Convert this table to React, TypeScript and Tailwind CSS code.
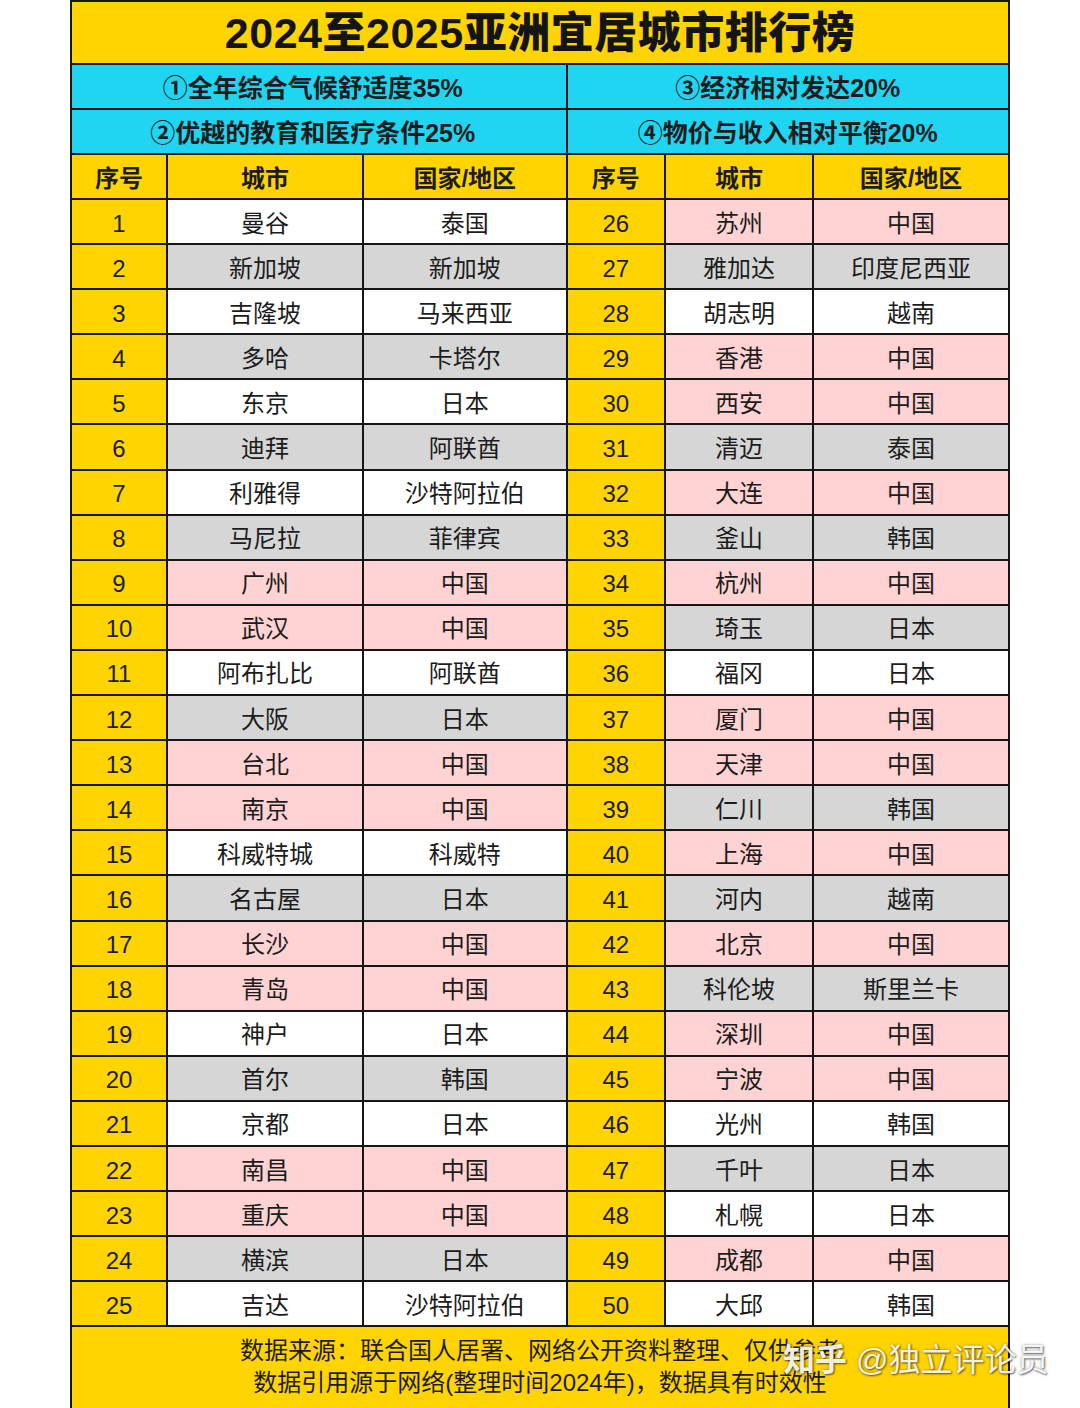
import React from "react";

type C = "w" | "g" | "p";
const left: [string, string, string, C][] = [
  ["1", "曼谷", "泰国", "w"],
  ["2", "新加坡", "新加坡", "g"],
  ["3", "吉隆坡", "马来西亚", "w"],
  ["4", "多哈", "卡塔尔", "g"],
  ["5", "东京", "日本", "w"],
  ["6", "迪拜", "阿联酋", "g"],
  ["7", "利雅得", "沙特阿拉伯", "w"],
  ["8", "马尼拉", "菲律宾", "g"],
  ["9", "广州", "中国", "p"],
  ["10", "武汉", "中国", "p"],
  ["11", "阿布扎比", "阿联酋", "w"],
  ["12", "大阪", "日本", "g"],
  ["13", "台北", "中国", "p"],
  ["14", "南京", "中国", "p"],
  ["15", "科威特城", "科威特", "w"],
  ["16", "名古屋", "日本", "g"],
  ["17", "长沙", "中国", "p"],
  ["18", "青岛", "中国", "p"],
  ["19", "神户", "日本", "w"],
  ["20", "首尔", "韩国", "g"],
  ["21", "京都", "日本", "w"],
  ["22", "南昌", "中国", "p"],
  ["23", "重庆", "中国", "p"],
  ["24", "横滨", "日本", "g"],
  ["25", "吉达", "沙特阿拉伯", "w"],
];
const right: [string, string, string, C][] = [
  ["26", "苏州", "中国", "p"],
  ["27", "雅加达", "印度尼西亚", "g"],
  ["28", "胡志明", "越南", "w"],
  ["29", "香港", "中国", "p"],
  ["30", "西安", "中国", "p"],
  ["31", "清迈", "泰国", "g"],
  ["32", "大连", "中国", "p"],
  ["33", "釜山", "韩国", "g"],
  ["34", "杭州", "中国", "p"],
  ["35", "琦玉", "日本", "g"],
  ["36", "福冈", "日本", "w"],
  ["37", "厦门", "中国", "p"],
  ["38", "天津", "中国", "p"],
  ["39", "仁川", "韩国", "g"],
  ["40", "上海", "中国", "p"],
  ["41", "河内", "越南", "g"],
  ["42", "北京", "中国", "p"],
  ["43", "科伦坡", "斯里兰卡", "g"],
  ["44", "深圳", "中国", "p"],
  ["45", "宁波", "中国", "p"],
  ["46", "光州", "韩国", "w"],
  ["47", "千叶", "日本", "g"],
  ["48", "札幌", "日本", "w"],
  ["49", "成都", "中国", "p"],
  ["50", "大邱", "韩国", "w"],
];

const bg: Record<C, string> = {
  w: "bg-white",
  g: "bg-[#d6d6d6]",
  p: "bg-[#ffd3d3]",
};

const FONT = { fontFamily: '"Liberation Sans", "Noto Sans CJK SC", sans-serif' };

function Cell({ children, className }: { children: React.ReactNode; className: string }) {
  return (
    <div className={`flex h-[43.1px] items-center justify-center pt-[4px] text-[24px] leading-none text-[#1c1c1c] ${className}`}>
      {children}
    </div>
  );
}

export default function App() {
  const rows = left.map((l, i) => [l, right[i]] as const);
  return (
    <div className="relative h-[1408px] w-[1080px] overflow-hidden bg-white" style={FONT}>
      <div className="ml-[70px] w-[940px] bg-[#161616] p-[2px]">
        <div className="grid grid-cols-[94px_194px_201.5px_96.5px_146px_194px] gap-[2px]">
          <div className="col-span-6 flex h-[61px] items-center justify-center bg-[#ffd401] pt-[2px] text-[43px] font-black leading-none tracking-[0.5px] text-[#141414]">
            2024至2025亚洲宜居城市排行榜
          </div>
          <div className="col-span-3 flex h-[43px] items-center justify-center bg-[#1fd5f1] pr-[12px] pt-[3px] text-[25px] font-bold leading-none text-[#1c1c1c]">
            ①全年综合气候舒适度35%
          </div>
          <div className="col-span-3 flex h-[43px] items-center justify-center bg-[#1fd5f1] pt-[3px] text-[25px] font-bold leading-none text-[#1c1c1c]">
            ③经济相对发达20%
          </div>
          <div className="col-span-3 flex h-[43px] items-center justify-center bg-[#1fd5f1] pr-[12px] pt-[3px] text-[25px] font-bold leading-none text-[#1c1c1c]">
            ②优越的教育和医疗条件25%
          </div>
          <div className="col-span-3 flex h-[43px] items-center justify-center bg-[#1fd5f1] pt-[3px] text-[25px] font-bold leading-none text-[#1c1c1c]">
            ④物价与收入相对平衡20%
          </div>
          {["序号", "城市", "国家/地区", "序号", "城市", "国家/地区"].map((h, i) => (
            <div
              key={i}
              className="flex h-[43px] items-center justify-center bg-[#ffd401] pt-[4px] text-[24px] font-bold leading-none text-[#1c1c1c]"
            >
              {h}
            </div>
          ))}
          {rows.map(([l, r]) => (
            <React.Fragment key={l[0]}>
              <Cell className="bg-[#ffd401]">{l[0]}</Cell>
              <Cell className={bg[l[3]]}>{l[1]}</Cell>
              <Cell className={bg[l[3]]}>{l[2]}</Cell>
              <Cell className="bg-[#ffd401]">{r[0]}</Cell>
              <Cell className={bg[r[3]]}>{r[1]}</Cell>
              <Cell className={bg[r[3]]}>{r[2]}</Cell>
            </React.Fragment>
          ))}
          <div className="col-span-6 flex h-[100px] flex-col items-center bg-[#ffd401] pt-[8px] text-[24px] leading-[32px] text-[#1c1c1c]">
            <div>数据来源：联合国人居署、网络公开资料整理、仅供参考</div>
            <div>数据引用源于网络(整理时间2024年)，数据具有时效性</div>
          </div>
        </div>
      </div>
      <div
        className="absolute left-[783px] top-[1344px] whitespace-nowrap text-[32px] leading-none text-white/90"
        style={{ textShadow: "1px 1px 2px rgba(0,0,0,0.55), 0 0 3px rgba(0,0,0,0.35)" }}
      >
        <span className="font-bold">知乎</span> @独立评论员
      </div>
    </div>
  );
}
